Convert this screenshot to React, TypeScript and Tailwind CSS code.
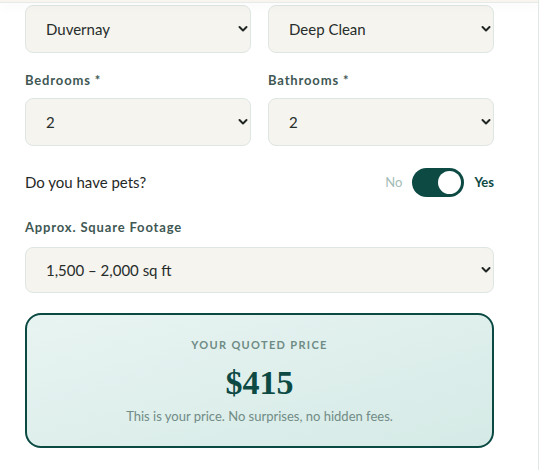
import { useState } from 'react';

const SANS = { fontFamily: 'Lato, "Noto Sans", sans-serif' };
const SERIF = { fontFamily: '"Liberation Serif", "DejaVu Serif", serif' };

function Chevron() {
  return (
    <svg
      width="10"
      height="7"
      viewBox="0 0 10 7"
      className="pointer-events-none absolute right-[3px] top-1/2 -translate-y-1/2"
    >
      <path d="M1.5 1.5 L5 5 L8.5 1.5" fill="none" stroke="#1f2624" strokeWidth="2" strokeLinecap="round" strokeLinejoin="round" />
    </svg>
  );
}

function Select({ value, options, tall = true }: { value: string; options: string[]; tall?: boolean }) {
  return (
    <div className="relative">
      <select
        defaultValue={value}
        className={`w-full appearance-none rounded-lg border border-[#dde6e3] bg-[#f6f4ef] pl-5 pr-8 text-[15px] text-[#262d2b] outline-none ${tall ? 'h-12' : 'h-[46px]'}`}
        style={SANS}
      >
        {options.map((o) => (
          <option key={o}>{o}</option>
        ))}
      </select>
      <Chevron />
    </div>
  );
}

function Label({ children }: { children: string }) {
  return <div className="text-[13px] font-bold leading-[18px] tracking-[0.065em] text-[#3f5854]">{children}</div>;
}

export default function App() {
  const [pets, setPets] = useState(true);

  return (
    <div className="min-h-[470px] w-[539px] border-r border-[#e2e8e6] bg-white" style={SANS}>
      <div className="relative z-10 h-[3px] border-b border-[#e6ebe9] bg-[#f8f5ef] shadow-[0_3px_10px_rgba(30,60,55,0.05)]" />

      <div className="pl-[25px] pr-[44px] pt-[2px]">
        <div className="grid grid-cols-2 gap-[17px]">
          <Select value="Duvernay" options={['Duvernay', 'Other']} />
          <Select value="Deep Clean" options={['Standard Clean', 'Deep Clean', 'Move Out']} />
        </div>

        <div className="mt-[18px] grid grid-cols-2 gap-[17px]">
          <div className="flex flex-col gap-[9px]">
            <Label>Bedrooms *</Label>
            <Select value="2" options={['1', '2', '3', '4', '5']} />
          </div>
          <div className="flex flex-col gap-[9px]">
            <Label>Bathrooms *</Label>
            <Select value="2" options={['1', '2', '3', '4']} />
          </div>
        </div>

        <div className="mt-[22px] flex h-[29px] items-center justify-between">
          <span className="text-[15px] text-[#1f2927]">Do you have pets?</span>
          <div className="flex items-center gap-[10px]">
            <span className={`text-[13px] ${pets ? 'text-[#a3bcb7]' : 'font-bold text-[#0d4a44]'}`}>No</span>
            <button
              type="button"
              onClick={() => setPets((v) => !v)}
              className={`flex h-[29px] w-[52px] items-center rounded-full px-[3px] ${pets ? 'justify-end bg-[#0d4a44]' : 'justify-start bg-[#c9d6d3]'}`}
            >
              <span className="h-[23px] w-[23px] rounded-full bg-white" />
            </button>
            <span className={`text-[13px] ${pets ? 'font-bold text-[#0d4a44]' : 'text-[#a3bcb7]'}`}>Yes</span>
          </div>
        </div>

        <div className="mt-[21px] flex flex-col gap-[11px]">
          <Label>Approx. Square Footage</Label>
          <Select value="1,500 – 2,000 sq ft" options={['Under 1,000 sq ft', '1,000 – 1,500 sq ft', '1,500 – 2,000 sq ft', '2,000+ sq ft']} tall={false} />
        </div>

        <div className="mt-5 flex h-[135px] flex-col items-center rounded-2xl border-2 border-[#0b4a43] bg-gradient-to-br from-[#e8f4f2] to-[#d5eae6] pt-[23px]">
          <div className="text-[11px] font-bold leading-[14px] tracking-[0.12em] text-[#6e8b85]">YOUR QUOTED PRICE</div>
          <div className="mt-[9px] text-[34px] font-bold leading-[44px] text-[#0d4a44]" style={SERIF}>
            $415
          </div>
          <div className="mt-[3px] text-[13px] leading-[17px] text-[#718b86]">This is your price. No surprises, no hidden fees.</div>
        </div>
      </div>
    </div>
  );
}
